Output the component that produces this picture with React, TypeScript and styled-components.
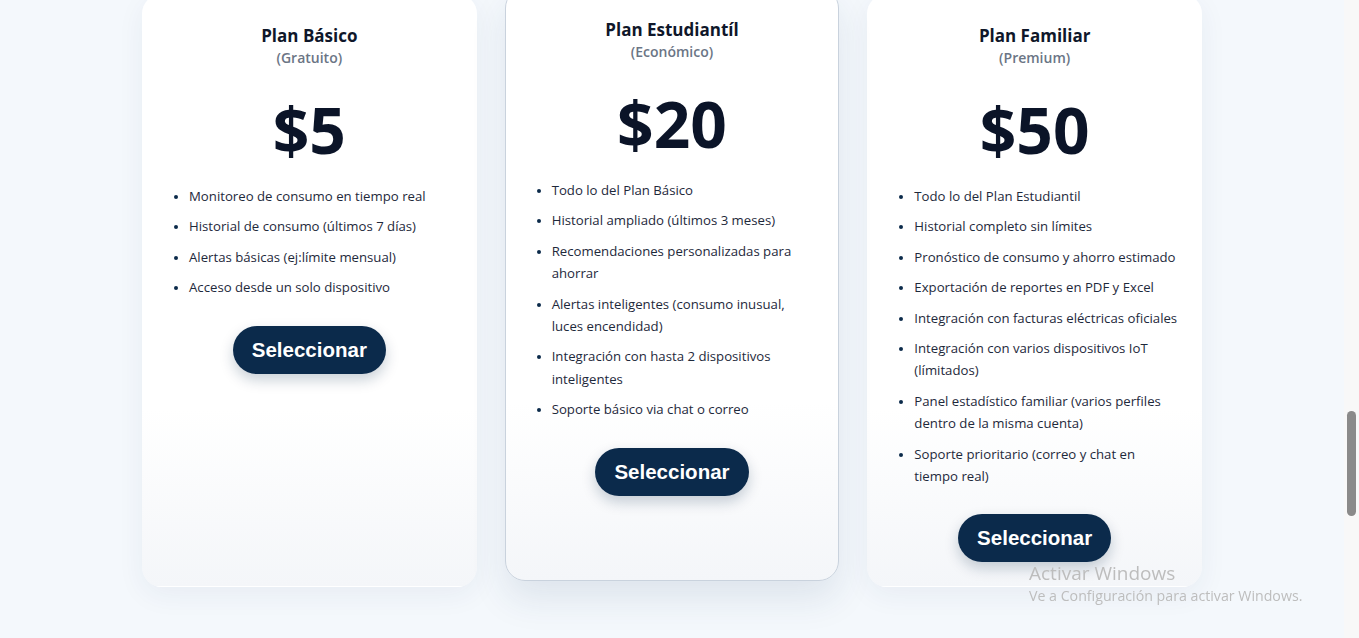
import React from "react";
import styled, { createGlobalStyle } from "styled-components";

const Global = createGlobalStyle`
  html, body { margin: 0; padding: 0; height: 100%; overflow: hidden; }
  body {
    background: #f4f8fc;
    font-family: "Open Sans", "Noto Sans", sans-serif;
    color: #1e293b;
  }
  * { box-sizing: border-box; }
`;

const Page = styled.div`
  display: flex;
  height: 100vh;
  overflow: hidden;
`;

const Main = styled.main`
  flex: 1;
  min-width: 0;
  background: #f4f8fc;
`;

const Grid = styled.div`
  display: grid;
  grid-template-columns: repeat(3, 1fr);
  gap: 28px;
  max-width: 1060px;
  margin: -6px auto 0;
  align-items: stretch;
`;

const Card = styled.article<{ $featured?: boolean }>`
  display: flex;
  flex-direction: column;
  align-items: center;
  height: 593px;
  padding: 29px 26px 24px;
  border-radius: 20px;
  background: linear-gradient(180deg, #ffffff 0%, #ffffff 70%, #f4f6f9 100%);
  border: 1px solid ${(p) => (p.$featured ? "#c9d2dd" : "transparent")};
  box-shadow: ${(p) =>
    p.$featured
      ? "0 18px 36px rgba(30, 58, 100, 0.10)"
      : "0 8px 28px rgba(30, 58, 100, 0.06)"};
  transform: ${(p) => (p.$featured ? "translateY(-6px)" : "none")};
`;

const Title = styled.h3`
  margin: 0;
  font-size: 17px;
  line-height: 24px;
  font-weight: 700;
  color: #0f172a;
`;

const Subtitle = styled.p`
  margin: 0;
  font-size: 14px;
  line-height: 20px;
  font-weight: 600;
  color: #6b7585;
`;

const Price = styled.div`
  margin: 23px 0 16px;
  font-size: 64px;
  line-height: 78px;
  font-weight: 700;
  color: #0b1428;
`;

const List = styled.ul`
  align-self: stretch;
  margin: 0 -4px 0 0;
  padding: 0 0 0 20px;
  list-style: disc;
`;

const Item = styled.li`
  font-size: 13.2px;
  line-height: 22.4px;
  color: #1e293b;
  margin-bottom: 8px;
  &::marker {
    color: #0b2a4a;
    font-size: 12px;
  }
`;

const SelectButton = styled.button`
  margin-top: 19px;
  padding: 12px 19px;
  border: none;
  border-radius: 24px;
  background: #0b2a4b;
  color: #ffffff;
  font-family: "Liberation Sans", Arial, sans-serif;
  font-size: 20.5px;
  line-height: 24px;
  font-weight: 700;
  box-shadow: 0 6px 14px rgba(11, 42, 75, 0.22);
  cursor: pointer;
`;

const Track = styled.div`
  width: 15px;
  height: 100vh;
  background: #f8f8f8;
  display: flex;
  justify-content: center;
  padding-top: 411px;
`;

const Thumb = styled.div`
  width: 9px;
  height: 105px;
  border-radius: 5px;
  background: #8a8a8a;
`;

const Watermark = styled.div`
  position: fixed;
  left: 1029px;
  top: 561px;
  color: #bdbdbd;
  font-family: "Open Sans", "Noto Sans", sans-serif;
  pointer-events: none;
`;

const WatermarkTitle = styled.div`
  font-size: 19px;
  line-height: 24px;
`;

const WatermarkText = styled.div`
  font-size: 14.2px;
  line-height: 22px;
`;

type Plan = {
  title: string;
  subtitle: string;
  price: string;
  featured?: boolean;
  items: string[];
};

const plans: Plan[] = [
  {
    title: "Plan Básico",
    subtitle: "(Gratuito)",
    price: "$5",
    items: [
      "Monitoreo de consumo en tiempo real",
      "Historial de consumo (últimos 7 días)",
      "Alertas básicas (ej:límite mensual)",
      "Acceso desde un solo dispositivo",
    ],
  },
  {
    title: "Plan Estudiantíl",
    subtitle: "(Económico)",
    price: "$20",
    featured: true,
    items: [
      "Todo lo del Plan Básico",
      "Historial ampliado (últimos 3 meses)",
      "Recomendaciones personalizadas para ahorrar",
      "Alertas inteligentes (consumo inusual, luces encendidad)",
      "Integración con hasta 2 dispositivos inteligentes",
      "Soporte básico via chat o correo",
    ],
  },
  {
    title: "Plan Familiar",
    subtitle: "(Premium)",
    price: "$50",
    items: [
      "Todo lo del Plan Estudiantil",
      "Historial completo sin límites",
      "Pronóstico de consumo y ahorro estimado",
      "Exportación de reportes en PDF y Excel",
      "Integración con facturas eléctricas oficiales",
      "Integración con varios dispositivos IoT (límitados)",
      "Panel estadístico familiar (varios perfiles dentro de la misma cuenta)",
      "Soporte prioritario (correo y chat en tiempo real)",
    ],
  },
];

export default function App() {
  return (
    <>
      <Global />
      <Page>
        <Main>
          <Grid>
            {plans.map((p) => (
              <Card key={p.title} $featured={p.featured}>
                <Title>{p.title}</Title>
                <Subtitle>{p.subtitle}</Subtitle>
                <Price>{p.price}</Price>
                <List>
                  {p.items.map((it) => (
                    <Item key={it}>{it}</Item>
                  ))}
                </List>
                <SelectButton>Seleccionar</SelectButton>
              </Card>
            ))}
          </Grid>
        </Main>
        <Track>
          <Thumb />
        </Track>
      </Page>
      <Watermark>
        <WatermarkTitle>Activar Windows</WatermarkTitle>
        <WatermarkText>Ve a Configuración para activar Windows.</WatermarkText>
      </Watermark>
    </>
  );
}
